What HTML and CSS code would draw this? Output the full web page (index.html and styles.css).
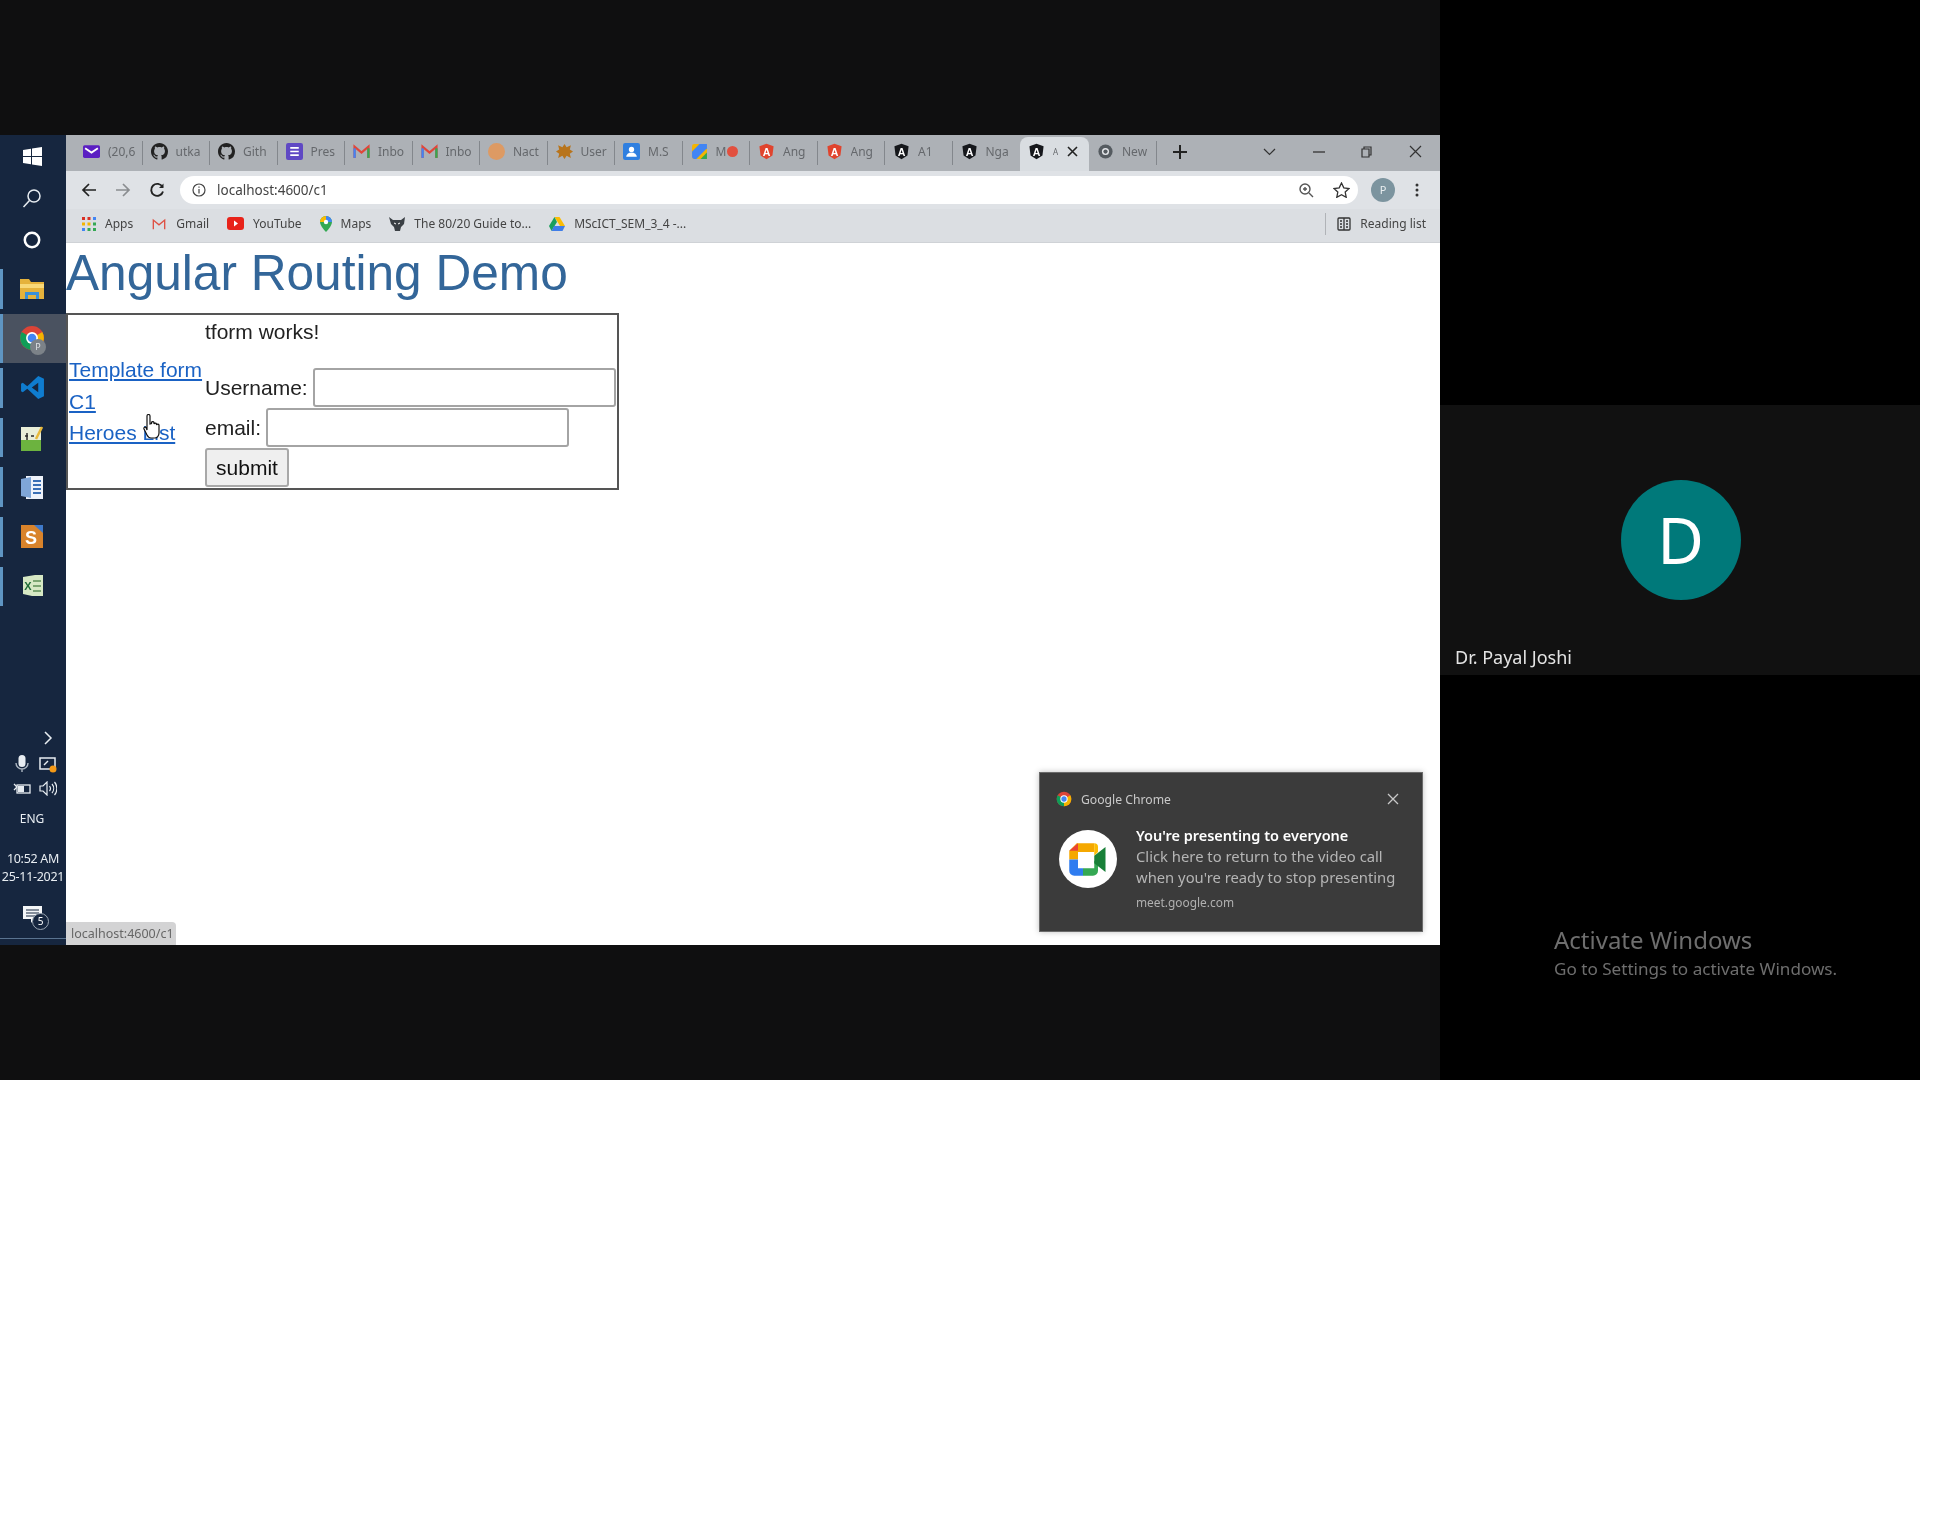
FILE: index.html
```html
<!DOCTYPE html>
<html lang="en">
<head>
  <meta charset="UTF-8">
  <title>Angular Routing Demo</title>
  <link rel="stylesheet" href="styles.css">
</head>
<body>

  <svg class="defs" width="0" height="0">
    <symbol id="i-github" viewBox="0 0 16 16"><path fill="#222" d="M8 0C3.58 0 0 3.58 0 8c0 3.54 2.29 6.53 5.47 7.59.4.07.55-.17.55-.38 0-.19-.01-.82-.01-1.49-2.01.37-2.53-.49-2.69-.94-.09-.23-.48-.94-.82-1.13-.28-.15-.68-.52-.01-.53.63-.01 1.08.58 1.23.82.72 1.21 1.87.87 2.33.66.07-.52.28-.87.51-1.07-1.78-.2-3.64-.89-3.64-3.95 0-.87.31-1.59.82-2.15-.08-.2-.36-1.02.08-2.12 0 0 .67-.21 2.2.82.64-.18 1.32-.27 2-.27.68 0 1.36.09 2 .27 1.53-1.04 2.2-.82 2.2-.82.44 1.1.16 1.92.08 2.12.51.56.82 1.27.82 2.15 0 3.07-1.87 3.75-3.65 3.95.29.25.54.73.54 1.48 0 1.07-.01 1.93-.01 2.2 0 .21.15.46.55.38A8.013 8.013 0 0016 8c0-4.42-3.58-8-8-8z"/></symbol>
    <symbol id="i-mail" viewBox="0 0 16 16"><rect y="2" width="16" height="12" rx="1.5" fill="#5b1fc2"/><path d="M2 5l6 4 6-4" fill="none" stroke="#fff" stroke-width="1.8"/></symbol>
    <symbol id="i-slides" viewBox="0 0 16 16"><rect width="16" height="16" rx="2" fill="#5f48c4"/><path d="M4 4.5h8M4 8h8M4 11.5h8" stroke="#fff" stroke-width="1.6"/></symbol>
    <symbol id="i-gmail" viewBox="0 0 16 16"><path d="M1.5 14V3.5L8 9l6.5-5.5V14" fill="none" stroke="#e0463a" stroke-width="2.2"/><path d="M1.5 5v9" stroke="#4285f4" stroke-width="2.2"/><path d="M14.5 5v9" stroke="#34a853" stroke-width="2.2"/></symbol>
    <symbol id="i-gmail-flat" viewBox="0 0 16 16"><path d="M1.5 14V3.5L8 9l6.5-5.5V14" fill="none" stroke="#df4f42" stroke-width="1.5"/></symbol>
    <symbol id="i-shield-red" viewBox="0 0 24 24"><path fill="#e0442e" d="M12 1L2 4.6l1.6 13.200L12 23l8.400-5.200L22 4.600z"/></symbol>
    <symbol id="i-shield-dark" viewBox="0 0 24 24"><path fill="#16181c" d="M12 1L2 4.6l1.6 13.200L12 23l8.400-5.200L22 4.600z"/></symbol>
    <symbol id="i-chrome" viewBox="0 0 24 24"><circle cx="12" cy="12" r="11" fill="#db4437"/><path d="M12 12L2.500 6.500A11 11 0 0 0 12 23z" fill="#0f9d58"/><path d="M12 12l9.500-5.500A11 11 0 0 1 12 23z" fill="#f4b400"/><circle cx="12" cy="12" r="5.500" fill="#fff"/><circle cx="12" cy="12" r="4" fill="#4285f4"/></symbol>
    <symbol id="i-chrome-grey" viewBox="0 0 24 24"><circle cx="12" cy="12" r="10" fill="#555b60"/><circle cx="12" cy="12" r="5" fill="#e5e7ea"/><circle cx="12" cy="12" r="3" fill="#555b60"/></symbol>
    <symbol id="i-meet" viewBox="0 0 32 28"><path d="M7 1h14v7H8v6H1V7z" fill="#f5a800"/><path d="M8 1L1 7h7z" fill="#ea4335"/><path d="M1 14h7v7h4v6H5a4 4 0 0 1-4-4z" fill="#2f7cf0"/><path d="M12 21h9v-6l3 2v6a4 4 0 0 1-4 4h-8z" fill="#34a853"/><path d="M21 1a3 3 0 0 1 3 3v4l-3 3V8z" fill="#fbbc04"/><path d="M21 11l9-7v20l-9-7z" fill="#188038"/></symbol>
  </svg>

  <div class="page">
    <main class="left">
      <div class="band-top"></div>

      <div class="screen">
        <!-- windows taskbar on the left -->
        <aside class="taskbar">
          <div class="sys-icon">
            <svg width="19" height="19" viewBox="0 0 19 19"><path fill="#fff" d="M0 3l8-1.200V9H0zM9 1.600L19 0v9H9zM0 10h8v7.200L0 16zM9 10h10v9L9 17.400z"/></svg>
          </div>
          <div class="sys-icon">
            <svg width="20" height="20" viewBox="0 0 20 20" fill="none" stroke="#e8edf2" stroke-width="1.500"><circle cx="12" cy="8" r="6"/><path d="M7.500 12.500L1.500 19"/></svg>
          </div>
          <div class="sys-icon">
            <svg width="18" height="18" viewBox="0 0 18 18" fill="none" stroke="#fff" stroke-width="2.500"><circle cx="9" cy="9" r="7.200"/></svg>
          </div>

          <div class="app open">
            <svg class="app-folder" width="24" height="22" viewBox="0 0 24 22"><path fill="#e5b23c" d="M0 2h9l2 3h13v17H0z"/><path fill="#f8d878" d="M0 7h24v4H0z"/><path fill="#3a90d8" d="M5 15h14v7h-3v-4H8v4H5z"/></svg>
          </div>
          <div class="app open active">
            <svg class="app-chrome" width="26" height="26" viewBox="0 0 24 24"><use href="#i-chrome"/></svg>
            <span class="profile-dot">P</span>
          </div>
          <div class="app open">
            <svg width="25" height="25" viewBox="0 0 24 24"><path fill="#0f7ccf" d="M17.500 1L23 3.500v17L17.500 23 7 13.200 2.700 16.500 1 15.500v-7l1.700-1L7 10.800zm0 6.500L11.300 12l6.200 4.500z"/></svg>
          </div>
          <div class="app open">
            <svg width="24" height="26" viewBox="0 0 24 26"><rect x="1" y="2" width="20" height="24" fill="#e9eed8"/><path fill="#6cb33f" d="M1 15h20v11H1z"/><path d="M5 11h3M7 8v7M11 11h3" stroke="#2b2b2b" stroke-width="1.500"/><path d="M16 14l6-12" stroke="#e8b93a" stroke-width="2.500"/></svg>
          </div>
          <div class="app open">
            <svg width="24" height="25" viewBox="0 0 24 25"><path fill="#eef2fa" d="M6 1h17v23H6z"/><path fill="#7fa6d8" d="M1 4l10-2v21L1 21z"/><path d="M13 6h8M13 10h8M13 14h8M13 18h8" stroke="#3a6fb5" stroke-width="1.800"/></svg>
          </div>
          <div class="app open">
            <svg width="24" height="25" viewBox="0 0 24 25"><rect x="1" y="1" width="22" height="23" fill="#d9832b"/><text x="11" y="20" class="logo-s">S</text><path d="M14 1h9v8z" fill="#3f79c9"/></svg>
          </div>
          <div class="app open">
            <svg width="24" height="24" viewBox="0 0 24 24"><path fill="#d6e8c4" d="M3 3l12-2h8v21H12L3 20z"/><path d="M13 7h8M13 12h8M13 17h8" stroke="#5d8f55" stroke-width="1.500"/><text x="8" y="16" class="logo-x">X</text></svg>
          </div>

          <div class="tray">
            <svg class="tray-chevron" width="9" height="14" viewBox="0 0 9 14" fill="none" stroke="#e8edf2" stroke-width="1.500"><path d="M1 1l6 6-6 6"/></svg>
            <div class="tray-grid">
              <svg width="14" height="18" viewBox="0 0 14 18"><rect x="3.500" y="0" width="7" height="12" rx="3.500" fill="#e8edf2"/><path d="M1 8a6 6 0 0 0 12 0M7 14v3" fill="none" stroke="#aab4c0" stroke-width="1.400"/></svg>
              <svg width="18" height="17" viewBox="0 0 18 17"><rect x="1" y="2" width="15" height="11" fill="none" stroke="#e8edf2" stroke-width="1.500"/><path d="M5 9l4-4" stroke="#e8edf2" stroke-width="1.500"/><circle cx="14" cy="13" r="3.500" fill="#f59a17"/></svg>
              <svg width="18" height="13" viewBox="0 0 18 13"><rect x="4" y="3" width="13" height="8" fill="none" stroke="#e8edf2" stroke-width="1.300"/><rect x="5" y="4" width="6" height="6" fill="#e8edf2"/><path d="M1 2l3 3M1 8l3-3" stroke="#e8edf2" stroke-width="1.300"/></svg>
              <svg width="18" height="15" viewBox="0 0 18 15" fill="none" stroke="#e8edf2" stroke-width="1.200"><path d="M1 5h3l4-4v13l-4-4H1z"/><path d="M10.500 5a4 4 0 0 1 0 5M13 3a7 7 0 0 1 0 9M15.500 1a10 10 0 0 1 0 13"/></svg>
            </div>
            <div class="tray-lang">ENG</div>
            <div class="tray-clock">10:52 AM<br>25-11-2021</div>
            <div class="tray-note">
              <svg width="19" height="19" viewBox="0 0 19 19"><path fill="#f4f6f8" d="M0 0h19v13h-8l-3 4v-4H0z"/><path d="M3 4h13M3 7h13M3 10h9" stroke="#16263f" stroke-width="1.200"/></svg>
              <span class="note-count">5</span>
            </div>
          </div>
        </aside>

        <!-- chrome window -->
        <section class="browser">
          <div class="tabstrip">
            <div class="tab"><svg class="fav" viewBox="0 0 16 16"><use href="#i-mail"/></svg><span class="tab-title">(20,6</span></div>
            <div class="tab"><svg class="fav" viewBox="0 0 16 16"><use href="#i-github"/></svg><span class="tab-title">utka</span></div>
            <div class="tab"><svg class="fav" viewBox="0 0 16 16"><use href="#i-github"/></svg><span class="tab-title">Gith</span></div>
            <div class="tab"><svg class="fav" viewBox="0 0 16 16"><use href="#i-slides"/></svg><span class="tab-title">Pres</span></div>
            <div class="tab"><svg class="fav" viewBox="0 0 16 16"><use href="#i-gmail"/></svg><span class="tab-title">Inbo</span></div>
            <div class="tab"><svg class="fav" viewBox="0 0 16 16"><use href="#i-gmail"/></svg><span class="tab-title">Inbo</span></div>
            <div class="tab"><svg class="fav" viewBox="0 0 16 16"><circle cx="8" cy="8" r="8" fill="#dd9a63"/></svg><span class="tab-title">Nact</span></div>
            <div class="tab"><svg class="fav" viewBox="0 0 16 16"><path fill="#b8741c" d="M8 1l2 3 4-2-1 4 3 2-3 2 1 4-4-2-2 3-2-3-4 2 1-4-3-2 3-2-1-4 4 2z"/></svg><span class="tab-title">User</span></div>
            <div class="tab"><svg class="fav" viewBox="0 0 16 16"><rect width="16" height="16" rx="2" fill="#2f7fe0"/><circle cx="8" cy="6" r="2.500" fill="#fff"/><path d="M3 13a5 4 0 0 1 10 0z" fill="#fff"/></svg><span class="tab-title">M.S</span></div>
            <div class="tab"><svg class="fav" viewBox="0 0 16 16"><rect x="1" y="1" width="14" height="14" rx="2" fill="#f4b400"/><path d="M1 8l7-7h7v4L5 15H3a2 2 0 0 1-2-2z" fill="#4285f4"/><path d="M9 15l6-6v6z" fill="#34a853"/></svg><span class="tab-title tab-rec">M</span><i class="rec-dot"></i></div>
            <div class="tab"><svg class="fav" viewBox="0 0 24 24"><use href="#i-shield-red"/><text x="12" y="18" class="logo-a">A</text></svg><span class="tab-title">Ang</span></div>
            <div class="tab"><svg class="fav" viewBox="0 0 24 24"><use href="#i-shield-red"/><text x="12" y="18" class="logo-a">A</text></svg><span class="tab-title">Ang</span></div>
            <div class="tab"><svg class="fav" viewBox="0 0 24 24"><use href="#i-shield-dark"/><text x="12" y="18" class="logo-a">A</text></svg><span class="tab-title">A1</span></div>
            <div class="tab no-sep"><svg class="fav" viewBox="0 0 24 24"><use href="#i-shield-dark"/><text x="12" y="18" class="logo-a">A</text></svg><span class="tab-title">Nga</span></div>
            <div class="tab tab-active"><svg class="fav" viewBox="0 0 24 24"><use href="#i-shield-dark"/><text x="12" y="18" class="logo-a">A</text></svg><span class="tab-title">A</span><svg class="tab-close" width="11" height="11" viewBox="0 0 11 11" stroke="#222" stroke-width="1.600"><path d="M1 1l9 9M10 1l-9 9"/></svg></div>
            <div class="tab"><svg class="fav" viewBox="0 0 24 24"><use href="#i-chrome-grey"/></svg><span class="tab-title">New</span></div>
            <svg class="newtab" width="14" height="14" viewBox="0 0 14 14" stroke="#222" stroke-width="2"><path d="M7 0v14M0 7h14"/></svg>
            <div class="winctl">
              <svg width="13" height="8" viewBox="0 0 13 8" fill="none" stroke="#333" stroke-width="1.200"><path d="M1 1l5.500 5.500L12 1"/></svg>
              <svg width="12" height="2" viewBox="0 0 12 2"><path d="M0 1h12" stroke="#333" stroke-width="1.300"/></svg>
              <svg width="11" height="12" viewBox="0 0 11 12" fill="none" stroke="#333" stroke-width="1.200"><path d="M1 3h7v8H1zM3 3V1h7v8H8"/></svg>
              <svg width="13" height="13" viewBox="0 0 13 13" stroke="#333" stroke-width="1.200"><path d="M1 1l11 11M12 1L1 12"/></svg>
            </div>
          </div>

          <div class="toolbar">
            <svg class="nav" width="16" height="16" viewBox="0 0 16 16" fill="none" stroke="#222" stroke-width="1.700"><path d="M15 8H2M8 2L2 8l6 6"/></svg>
            <svg class="nav" width="16" height="16" viewBox="0 0 16 16" fill="none" stroke="#8a8d90" stroke-width="1.700"><path d="M1 8h13M8 2l6 6-6 6"/></svg>
            <svg class="nav" width="16" height="16" viewBox="0 0 16 16" fill="none" stroke="#222" stroke-width="1.900"><path d="M13.500 5A6 6 0 1 0 14 9.500"/><path d="M14.500 1.500v4.500H10z" fill="#222" stroke="none"/></svg>
            <div class="omnibox">
              <svg width="14" height="14" viewBox="0 0 14 14" fill="none" stroke="#444" stroke-width="1.200"><circle cx="7" cy="7" r="6"/><path d="M7 6v4.500M7 3.500v1.300"/></svg>
              <span class="url">localhost:4600/c1</span>
              <svg class="omni-zoom" width="15" height="15" viewBox="0 0 15 15" fill="none" stroke="#555" stroke-width="1.400"><circle cx="6" cy="6" r="5"/><path d="M10 10l4 4M4 6h4M6 4v4"/></svg>
              <svg width="17" height="16" viewBox="0 0 17 16" fill="none" stroke="#333" stroke-width="1.300"><path d="M8.500 1l2.300 4.800 5.200.7-3.800 3.600 1 5.200-4.700-2.500-4.700 2.500 1-5.200L1 6.500l5.200-.7z"/></svg>
            </div>
            <span class="avatar-small">P</span>
            <svg width="4" height="14" viewBox="0 0 4 14" fill="#333"><circle cx="2" cy="2" r="1.500"/><circle cx="2" cy="7" r="1.500"/><circle cx="2" cy="12" r="1.500"/></svg>
          </div>

          <div class="bookmarks">
            <span class="bm"><svg width="14" height="14" viewBox="0 0 14 14"><g fill="#d93025"><rect width="3" height="3"/><rect x="5.500" width="3" height="3"/></g><rect x="11" width="3" height="3" fill="#4285f4"/><g fill="#f4b400"><rect y="5.500" width="3" height="3"/><rect x="5.500" y="5.500" width="3" height="3"/></g><rect x="11" y="5.500" width="3" height="3" fill="#34a853"/><g fill="#4285f4"><rect y="11" width="3" height="3"/></g><g fill="#34a853"><rect x="5.500" y="11" width="3" height="3"/><rect x="11" y="11" width="3" height="3"/></g></svg>Apps</span>
            <span class="bm"><svg width="16" height="14" viewBox="0 0 16 16"><use href="#i-gmail-flat"/></svg>Gmail</span>
            <span class="bm"><svg width="17" height="13" viewBox="0 0 17 13"><rect width="17" height="13" rx="3" fill="#e8231a"/><path d="M7 3.500l4 3-4 3z" fill="#fff"/></svg>YouTube</span>
            <span class="bm"><svg width="12" height="16" viewBox="0 0 12 16"><path d="M6 0a6 6 0 0 1 6 6c0 4-6 10-6 10S0 10 0 6a6 6 0 0 1 6-6z" fill="#34a853"/><path d="M6 0a6 6 0 0 1 6 6L6 6z" fill="#4285f4"/><path d="M0 6a6 6 0 0 1 6-6v6z" fill="#fbbc04"/><circle cx="6" cy="6" r="2.200" fill="#fff"/></svg>Maps</span>
            <span class="bm"><svg width="16" height="16" viewBox="0 0 16 16"><path fill="#3b4045" d="M0 1l4 3h8l4-3-1 7-3 3-1 4H6l-1-4-3-3z"/><path d="M5 7l2 1M11 7L9 8" stroke="#fff"/></svg>The 80/20 Guide to...</span>
            <span class="bm"><svg width="16" height="14" viewBox="0 0 16 14"><path d="M5.500 0h5l5.500 9h-5z" fill="#fbbc04"/><path d="M5.500 0L0 9l2.500 5 5.500-9z" fill="#1a9f5c"/><path d="M2.500 14h11L16 9H5z" fill="#3f7de8"/></svg>MScICT_SEM_3_4 -...</span>
            <span class="bm bm-reading"><svg width="14" height="14" viewBox="0 0 14 14" fill="none" stroke="#333" stroke-width="1.300"><rect x="1" y="1" width="12" height="12" rx="1"/><path d="M7 1v12M3 4h2M3 7h2M3 10h2M9 4h2M9 7h2M9 10h2"/></svg>Reading list</span>
          </div>

          <div class="content">
            <h1 class="title">Angular Routing Demo</h1>
            <table class="demo-table">
              <tr>
                <td class="nav-cell">
                  <a href="#">Template form</a>
                  <a href="#">C1</a>
                  <a href="#">Heroes List</a>
                </td>
                <td class="form-cell">
                  <p class="works">tform works!</p>
                  <form>
                    <div class="field"><label for="username">Username:</label><input type="text" id="username"></div>
                    <div class="field"><label for="email">email:</label><input type="text" id="email"></div>
                    <button type="button">submit</button>
                  </form>
                </td>
              </tr>
            </table>

            <svg class="cursor" width="20" height="26" viewBox="0 0 20 26"><path fill="#fff" stroke="#111" stroke-width="1.200" d="M5 2a1.500 1.500 0 0 1 3 0v8l1.500-.5v-1a1.300 1.300 0 0 1 2.500 0v1.500a1.300 1.300 0 0 1 2.500 0v1a1.300 1.300 0 0 1 2.500 0V19c0 3-2 5-4 5H9c-2 0-3-1-4-3l-3-6c-.5-1.500 1-2.500 2-1.500L5 16z"/></svg>

            <div class="status-bubble">localhost:4600/c1</div>

            <div class="toast">
              <div class="toast-head">
                <svg width="16" height="16" viewBox="0 0 24 24"><use href="#i-chrome"/></svg>
                <span>Google Chrome</span>
                <svg class="toast-close" width="12" height="12" viewBox="0 0 12 12" stroke="#c8c8c8" stroke-width="1.300"><path d="M1 1l10 10M11 1L1 11"/></svg>
              </div>
              <div class="toast-body">
                <div class="meet-logo"><svg width="40" height="35" viewBox="0 0 32 28"><use href="#i-meet"/></svg></div>
                <div class="toast-text">
                  <strong>You're presenting to everyone</strong>
                  <span>Click here to return to the video call</span>
                  <span>when you're ready to stop presenting</span>
                  <small>meet.google.com</small>
                </div>
              </div>
            </div>
          </div>
        </section>
      </div>

      <div class="band-bottom"></div>
    </main>

    <!-- participant column -->
    <aside class="right">
      <div class="tile">
        <div class="avatar">D</div>
        <div class="tile-name">Dr. Payal Joshi</div>
      </div>
      <div class="activate">
        <div class="activate-title">Activate Windows</div>
        <div class="activate-sub">Go to Settings to activate Windows.</div>
      </div>
    </aside>
  </div>

</body>
</html>
```

FILE: styles.css
```css
* {
  box-sizing: border-box;
}
html, body {
  margin: 0;
  background-color: #fff;
}
body {
  font-family: "Noto Sans", sans-serif;
}
.defs {
  display: block;
  height: 0;
}
.logo-a {
  font: bold 15px "Liberation Sans", sans-serif;
  fill: #fff;
  text-anchor: middle;
}
.logo-s {
  font: bold 18px "Liberation Sans", sans-serif;
  fill: #fff;
  text-anchor: middle;
}
.logo-x {
  font: bold 11px "Liberation Sans", sans-serif;
  fill: #1d6b35;
  text-anchor: middle;
}

.page {
  display: flex;
  width: 1920px;
  height: 1080px;
  filter: blur(0.5px);
}
.left {
  width: 1440px;
  display: flex;
  flex-direction: column;
  background-color: #0f0f10;
}
.band-top {
  height: 135px;
}
.band-bottom {
  height: 135px;
}
.screen {
  height: 810px;
  display: flex;
}

/* taskbar */
.taskbar {
  width: 66px;
  padding-bottom: 6px;
  background-color: #16263f;
  display: flex;
  flex-direction: column;
}
.sys-icon {
  height: 42px;
  padding-right: 2px;
  display: flex;
  align-items: center;
  justify-content: center;
}
.app {
  height: 49.6px;
  padding-right: 2px;
  display: flex;
  align-items: center;
  justify-content: center;
  position: relative;
}
.sys-icon + .app {
  margin-top: 3px;
}
.app-folder {
  margin-top: -2px;
}
.app.open::before {
  content: "";
  position: absolute;
  left: 0;
  top: 5px;
  bottom: 5px;
  width: 3px;
  background-color: #5f95c2;
}
.app.active {
  background-color: #4a5260;
}
.app.active::before {
  top: 0;
  bottom: 0;
}
.profile-dot {
  position: absolute;
  left: 30px;
  top: 25px;
  width: 16px;
  height: 16px;
  border-radius: 50%;
  background-color: #7c8288;
  color: #dfe2e5;
  font-size: 9px;
  line-height: 16px;
  text-align: center;
}
.tray {
  margin-top: auto;
  display: flex;
  flex-direction: column;
  color: #e8edf2;
  padding-bottom: 8px;
  border-bottom: 1px solid #5a7390;
}
.tray-chevron {
  margin: 0 0 10px 44px;
}
.tray-grid {
  display: grid;
  grid-template-columns: 26px 26px;
  justify-items: center;
  align-items: center;
  row-gap: 8px;
  padding-left: 9px;
}
.tray-lang {
  margin-top: 15px;
  padding-right: 2px;
  font-size: 12px;
  line-height: 16px;
  text-align: center;
}
.tray-clock {
  margin-top: 23px;
  font-size: 12.5px;
  line-height: 18px;
  text-align: center;
  white-space: nowrap;
  letter-spacing: -0.3px;
}
.tray-note {
  position: relative;
  height: 24px;
  margin: 20px 0 0 23px;
}
.note-count {
  position: absolute;
  left: 9px;
  top: 7px;
  width: 17px;
  height: 17px;
  border-radius: 50%;
  background-color: #16263f;
  border: 1px solid #9aa5b2;
  color: #fff;
  font-size: 10px;
  line-height: 15px;
  text-align: center;
}

/* browser */
.browser {
  flex: 1;
  display: flex;
  flex-direction: column;
  background-color: #fff;
}
.tabstrip {
  height: 36px;
  display: flex;
  align-items: flex-end;
  padding-left: 9px;
  background-color: #adb1b6;
}
.tab {
  width: 67.5px;
  height: 36px;
  display: flex;
  align-items: center;
  gap: 8px;
  padding: 0 0 3px 8px;
  position: relative;
  flex-shrink: 0;
}
.tab::after {
  content: "";
  position: absolute;
  right: 0;
  top: 6px;
  bottom: 6px;
  width: 1px;
  background-color: #83878c;
}
.tab.no-sep::after,
.tab-active::after {
  display: none;
}
.tab-active {
  width: 69px;
  height: 34px;
  padding-bottom: 5px;
  background-color: #d9dde1;
  border-radius: 8px 8px 0 0;
}
.fav {
  width: 17px;
  height: 17px;
  flex-shrink: 0;
}
.tab-title {
  font-size: 12px;
  color: #65686c;
  overflow: hidden;
  white-space: nowrap;
  width: 28px;
}
.tab-rec {
  width: 11px;
}
.rec-dot {
  width: 11px;
  height: 11px;
  margin-left: -8px;
  border-radius: 50%;
  background-color: #e2503f;
}
.tab-active .tab-title {
  width: 6px;
  font-size: 8px;
}
.tab-close {
  margin-left: 0;
}
.newtab {
  margin: 0 0 12px 16px;
}
.winctl {
  margin-left: auto;
  height: 34px;
  width: 177px;
  display: flex;
  align-items: center;
  justify-content: space-between;
  padding: 0 18px 5px 0;
}
.toolbar {
  height: 38px;
  padding: 2px 21px 2px 15px;
  display: flex;
  align-items: center;
  gap: 18px;
  background-color: #dfe2e6;
}
.omnibox {
  flex: 1;
  height: 28px;
  margin-left: -3px;
  padding: 0 8px 0 12px;
  display: flex;
  align-items: center;
  gap: 11px;
  border-radius: 14px;
  background-color: #fff;
}
.url {
  flex: 1;
  font-size: 13.5px;
  color: #444;
}
.omni-zoom {
  margin-right: 8px;
}
.avatar-small {
  width: 24px;
  height: 24px;
  margin-left: -5px;
  margin-right: 2px;
  border-radius: 50%;
  background-color: #7c949f;
  color: #e9eef0;
  font-size: 11px;
  line-height: 24px;
  text-align: center;
}
.bookmarks {
  height: 34px;
  padding: 0 14px 4px 16px;
  display: flex;
  align-items: center;
  gap: 18px;
  background-color: #dbdee2;
  border-bottom: 1px solid #cfd2d6;
}
.bm {
  display: flex;
  align-items: center;
  gap: 9px;
  font-size: 12px;
  color: #444;
  white-space: nowrap;
}
.bm-reading {
  margin-left: auto;
  padding-left: 11px;
  border-left: 1px solid #b0b3b7;
  height: 22px;
}

/* the demo page inside the browser */
.content {
  flex: 1;
  position: relative;
  font-family: "Liberation Sans", Arial, sans-serif;
  overflow: hidden;
}
.title {
  margin: 0;
  height: 70px;
  font-size: 49.6px;
  font-weight: normal;
  line-height: 60px;
  color: #336699;
}
.demo-table {
  width: 553px;
  border: 2px solid #555;
  border-spacing: 1px;
  font-size: 21px;
  color: #222;
}
.nav-cell,
.form-cell {
  padding: 0;
}
.nav-cell {
  width: 135px;
  vertical-align: middle;
  white-space: nowrap;
}
.nav-cell a {
  display: block;
  height: 31.5px;
  line-height: 31.5px;
  color: #1a62c4;
}
.form-cell {
  padding-top: 3px;
  vertical-align: top;
}
.works {
  margin: 0 0 23px;
  line-height: 26px;
}
.field {
  display: flex;
  align-items: center;
  gap: 5px;
  margin-bottom: 1px;
}
.field input {
  width: 303px;
  height: 39px;
  border: 2px solid #a4a4a4;
  border-radius: 3px;
  background-color: #fff;
}
form button {
  display: block;
  width: 84px;
  height: 39px;
  padding: 0;
  border: 2px solid #a8a8a8;
  border-radius: 3px;
  background-color: #efefef;
  font: 21px "Liberation Sans", Arial, sans-serif;
  color: #111;
}
.cursor {
  position: absolute;
  left: 76px;
  top: 171px;
}
.status-bubble {
  position: absolute;
  left: 0;
  bottom: 0;
  width: 110px;
  height: 23px;
  padding-left: 5px;
  background-color: #d3d3d4;
  border-radius: 0 4px 0 0;
  font: 12.5px/23px "Noto Sans", sans-serif;
  color: #666;
  white-space: nowrap;
}
.toast {
  position: absolute;
  left: 973px;
  top: 529px;
  width: 384px;
  height: 160px;
  background-color: #3b3b3b;
  border: 1px solid #6a6a6a;
  box-shadow: 0 0 6px rgba(0, 0, 0, 0.25);
  font-family: "Noto Sans", sans-serif;
  color: #c9c9c9;
}
.toast-head {
  height: 52px;
  padding: 0 23px 0 16px;
  display: flex;
  align-items: center;
  gap: 9px;
  font-size: 12.2px;
}
.toast-close {
  margin-left: auto;
}
.toast-body {
  display: flex;
  gap: 19px;
  padding-left: 19px;
}
.meet-logo {
  width: 58px;
  height: 58px;
  margin-top: 5px;
  border-radius: 50%;
  background-color: #fff;
  display: flex;
  align-items: center;
  justify-content: center;
}
.toast-text {
  display: flex;
  flex-direction: column;
  font-size: 14.8px;
  line-height: 21px;
  color: #b5b5b5;
  white-space: nowrap;
}
.toast-text strong {
  font-size: 14.5px;
  color: #fff;
  font-weight: 600;
}
.toast-text small {
  margin-top: 4px;
  font-size: 11.9px;
  color: #b0b0b0;
}

/* participant column */
.right {
  width: 480px;
  background-color: #000;
  display: flex;
  flex-direction: column;
  padding-top: 405px;
}
.tile {
  height: 270px;
  padding: 75px 0 0 1px;
  background-color: #111;
  display: flex;
  flex-direction: column;
  align-items: center;
}
.avatar {
  width: 120px;
  height: 120px;
  border-radius: 50%;
  background-color: #00797a;
  color: #fff;
  font-size: 64px;
  line-height: 120px;
  text-align: center;
}
.tile-name {
  align-self: flex-start;
  margin: 44px 0 0 14px;
  color: #e4e4e4;
  font-size: 18px;
  line-height: 26px;
}
.activate {
  margin: 250px 0 0 114px;
  color: #6e6e6e;
}
.activate-title {
  font-size: 24px;
  line-height: 30px;
}
.activate-sub {
  font-size: 17.1px;
  line-height: 28px;
}
```
